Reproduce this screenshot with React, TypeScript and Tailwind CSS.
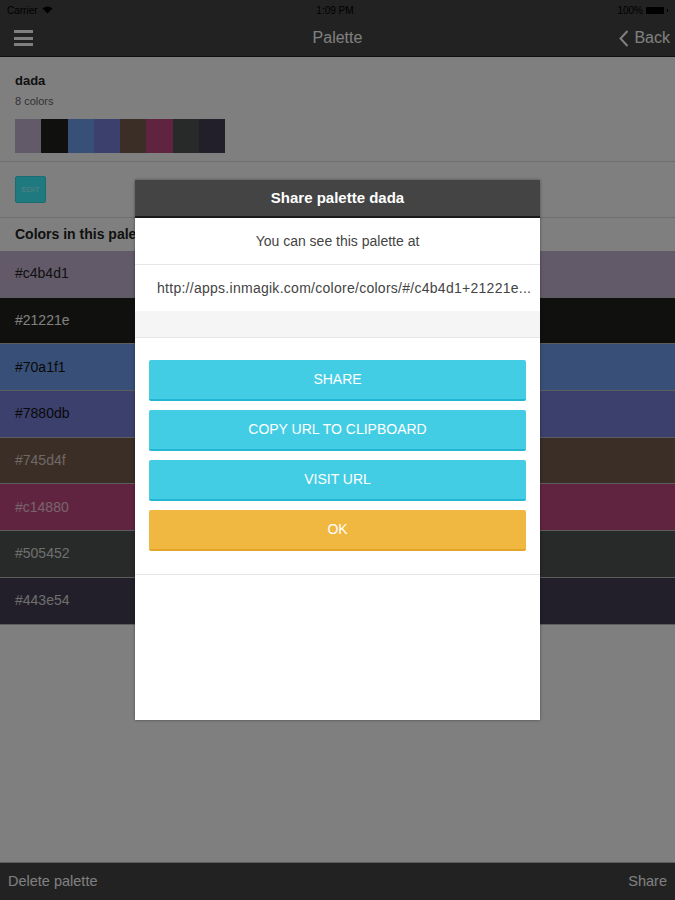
import React from "react";

const swatches = [
  "bg-[#c4b4d1]",
  "bg-[#21221e]",
  "bg-[#70a1f1]",
  "bg-[#7880db]",
  "bg-[#745d4f]",
  "bg-[#c14880]",
  "bg-[#505452]",
  "bg-[#443e54]",
];

const rows = [
  { hex: "#c4b4d1", cls: "bg-[#c4b4d1] text-[#222]" },
  { hex: "#21221e", cls: "bg-[#21221e] text-white" },
  { hex: "#70a1f1", cls: "bg-[#70a1f1] text-[#111]" },
  { hex: "#7880db", cls: "bg-[#7880db] text-[#111]" },
  { hex: "#745d4f", cls: "bg-[#745d4f] text-[#e0d0c8]" },
  { hex: "#c14880", cls: "bg-[#c14880] text-[#f0c8d8]" },
  { hex: "#505452", cls: "bg-[#505452] text-[#dddddd]" },
  { hex: "#443e54", cls: "bg-[#443e54] text-[#dddddd]" },
];

function ModalButton({ label, cls }: { label: string; cls: string }) {
  return (
    <div
      className={`h-[41px] rounded-[2px] flex items-center justify-center text-white text-[14px] uppercase ${cls}`}
    >
      {label}
    </div>
  );
}

export default function App() {
  return (
    <div className="relative w-[675px] h-[900px] overflow-hidden bg-white font-['Liberation_Sans',Arial,sans-serif] flex flex-col">
      {/* status bar */}
      <div className="h-[20px] bg-[#444] flex items-center justify-between px-[7px] text-[10px] text-black shrink-0">
        <div className="flex items-center gap-[4px]">
          <span>Carrier</span>
          <svg width="11" height="8" viewBox="0 0 11 8">
            <path d="M0.5 2.5 Q5.5 -1.5 10.5 2.5 L5.5 7.5 Z" fill="#000" />
          </svg>
        </div>
        <span>1:09 PM</span>
        <div className="flex items-center gap-[3px]">
          <span>100%</span>
          <div className="w-[18px] h-[7px] bg-black rounded-[1px]" />
          <div className="w-[1px] h-[3px] bg-black" />
        </div>
      </div>
      {/* nav bar */}
      <div className="h-[37px] bg-[#444] border-b border-[#222] flex items-center justify-between px-[14px] shrink-0 relative">
        <div className="flex flex-col gap-[3.5px] w-[19px]">
          <div className="h-[3px] bg-white" />
          <div className="h-[3px] bg-white" />
          <div className="h-[3px] bg-white" />
        </div>
        <div className="absolute left-0 right-0 text-center text-white text-[16px] pointer-events-none">
          Palette
        </div>
        <div className="flex items-center gap-[5px] text-white text-[16px] -mr-[9px]">
          <svg width="10" height="17" viewBox="0 0 10 17">
            <path d="M8.5 1 L1.5 8.5 L8.5 16" stroke="#fff" strokeWidth="2" fill="none" />
          </svg>
          <span>Back</span>
        </div>
      </div>

      {/* content */}
      <div className="flex-1 flex flex-col">
        <div className="px-[15px] pt-[16px] pb-[8px] border-b border-[#ddd]">
          <div className="text-[13px] font-bold text-[#222] leading-[16px]">dada</div>
          <div className="text-[11px] text-[#666] mt-[5px] leading-[14px]">8 colors</div>
          <div className="flex mt-[11px]">
            {swatches.map((s, i) => (
              <div key={i} className={`w-[26.25px] h-[34px] ${s}`} />
            ))}
          </div>
        </div>
        <div className="px-[15px] py-[14px] border-b border-[#ddd]">
          <div className="w-[31px] h-[27px] bg-[#3cf4ff] border border-[#30d8e4] rounded-[2px] flex items-center justify-center text-[8px] text-[#b8ffff]">
            EDIT
          </div>
        </div>
        <div className="h-[33px] px-[15px] flex items-center text-[14px] font-bold text-[#222]">
          Colors in this palette
        </div>
        <div className="flex flex-col">
          {rows.map((r) => (
            <div
              key={r.hex}
              className={`h-[46.7px] border-b border-[#bbb] flex items-center px-[15px] text-[14px] ${r.cls}`}
            >
              {r.hex}
            </div>
          ))}
        </div>
      </div>

      {/* footer */}
      <div className="h-[38px] bg-[#444] border-t border-[#bbb] flex items-center justify-between px-[8px] text-white text-[14.5px] shrink-0">
        <span>Delete palette</span>
        <span>Share</span>
      </div>

      {/* overlay */}
      <div className="absolute inset-0 bg-black/50" />

      {/* modal */}
      <div className="absolute left-[135px] top-[180px] w-[405px] h-[540px] bg-white shadow-[0_0_3px_rgba(0,0,0,0.4)] flex flex-col">
        <div className="h-[38px] bg-[#444] border-b-[2px] border-[#1a1a1a] flex items-center justify-center text-white text-[15px] font-bold shrink-0">
          Share palette dada
        </div>
        <div className="h-[47px] border-b border-[#e6e6e6] flex items-center justify-center text-[14px] text-[#444] shrink-0">
          You can see this palette at
        </div>
        <div className="h-[46px] flex items-center pl-[22px] text-[14px] tracking-[0.27px] text-[#444] shrink-0 whitespace-nowrap">
          http://apps.inmagik.com/colore/colors/#/c4b4d1+21221e...
        </div>
        <div className="h-[27px] bg-[#f5f5f5] border-b border-[#e6e6e6] shrink-0" />
        <div className="px-[14px] pt-[22px] pb-[23px] flex flex-col gap-[9px] border-b border-[#e6e6e6] shrink-0">
          <ModalButton label="Share" cls="bg-[#43cde5] border-b-[2px] border-[#22b6d2]" />
          <ModalButton label="Copy url to clipboard" cls="bg-[#43cde5] border-b-[2px] border-[#22b6d2]" />
          <ModalButton label="Visit url" cls="bg-[#43cde5] border-b-[2px] border-[#22b6d2]" />
          <ModalButton label="Ok" cls="bg-[#f0b840] border-b-[2px] border-[#e3a52a]" />
        </div>
      </div>
    </div>
  );
}
